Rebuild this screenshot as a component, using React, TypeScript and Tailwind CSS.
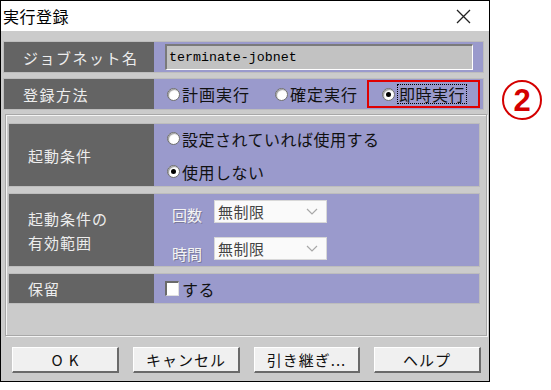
import React from "react";

const JP = { fontFamily: '"Noto Sans CJK JP", "Noto Sans", sans-serif' };

function Radio({ checked }: { checked?: boolean }) {
  return (
    <span className="w-[13px] h-[13px] rounded-full bg-white border border-[#6e6e6e] inline-flex items-center justify-center shadow-[inset_1px_1px_1px_#9a9a9a] shrink-0">
      {checked && <span className="w-[5px] h-[5px] rounded-full bg-black" />}
    </span>
  );
}

function Btn({ children, w }: { children: React.ReactNode; w: string }) {
  return (
    <div
      className={`${w} h-[26px] bg-[#f0f0f0] border-t border-l border-t-white border-l-white border-b-2 border-r-2 border-b-[#6a6a6a] border-r-[#6a6a6a] flex items-center justify-center text-[15px] text-[#111] leading-none`}
    >
      {children}
    </div>
  );
}

function Select() {
  return (
    <div className="w-[113px] h-[23px] bg-[#fafafa] border border-[#d8d8d8] flex items-center pl-[3px] pr-[8px] text-[15px] text-[#444] leading-none">
      <span className="flex-1 tracking-[0.5px]">無制限</span>
      <svg width="12" height="7" viewBox="0 0 12 7">
        <path d="M1 1 L6 6 L11 1" fill="none" stroke="#a8a8a8" strokeWidth="1.2" />
      </svg>
    </div>
  );
}

export default function App() {
  return (
    <div className="w-[551px] h-[390px] bg-white flex items-start" style={JP}>
      <div className="w-[490px] h-[382px] border border-black flex flex-col bg-[#cbcbcb]">
        {/* title bar */}
        <div className="h-[30px] bg-white flex items-center justify-between pl-[2px] pr-[18px]">
          <span className="text-[16px] text-black leading-none tracking-[0.5px]">実行登録</span>
          <svg width="15" height="15" viewBox="0 0 15 15">
            <path d="M1 1 L14 14 M14 1 L1 14" stroke="#222" strokeWidth="1.3" />
          </svg>
        </div>
        {/* body */}
        <div className="flex flex-col pt-[10px]">
          {/* row 1 */}
          <div className="ml-[2px] w-[481px] h-[32px] flex border border-[#bdbdbd]">
            <div className="w-[150px] bg-[#646464] text-[#ededed] text-[15px] flex items-center pl-[19px] tracking-[1.5px] leading-none">
              ジョブネット名
            </div>
            <div className="flex-1 bg-[#9a9acc] flex items-center pl-[11px]">
              <div className="w-[308px] h-[26px] bg-[#c2c2c2] border-t-2 border-l-2 border-t-[#7a7a7a] border-l-[#7a7a7a] border-b border-r border-b-white border-r-white flex items-center pl-[2px] text-[13.3px] text-black leading-none" style={{ fontFamily: '"Liberation Mono", monospace' }}>
                terminate-jobnet
              </div>
            </div>
          </div>
          {/* row 2 */}
          <div className="ml-[2px] mt-[5px] w-[481px] h-[32px] flex border border-[#bdbdbd]">
            <div className="w-[150px] bg-[#646464] text-[#ededed] text-[15px] flex items-center pl-[19px] tracking-[1.5px] leading-none">
              登録方法
            </div>
            <div className="flex-1 bg-[#9a9acc] flex items-center pl-[13px] text-[16px] text-[#111] leading-none">
              <div className="flex items-center gap-[2px]">
                <Radio />
                <span className="tracking-[1px]">計画実行</span>
              </div>
              <div className="flex items-center gap-[2px] ml-[25px]">
                <Radio />
                <span className="tracking-[1px]">確定実行</span>
              </div>
              <div className="ml-[9px] w-[113px] h-[28px] border-2 border-[#e00000] flex items-center pl-[13px] gap-[2px]">
                <Radio checked />
                <span className="tracking-[0.5px] border border-dotted border-black px-[1px] py-[1px]">即時実行</span>
              </div>
            </div>
          </div>
          {/* group */}
          <div className="ml-[4px] mt-[4px] w-[482px] h-[222px] border border-[#a8a8a8] shadow-[inset_1px_1px_0_#f4f4f4,1px_1px_0_#f4f4f4] flex flex-col pl-[2px] pt-[8px]">
            {/* Row A */}
            <div className="w-[472px] h-[64px] flex border border-[#bdbdbd]">
              <div className="w-[145px] bg-[#646464] text-[#ededed] text-[15px] flex items-center pl-[19px] tracking-[1px] leading-none">
                起動条件
              </div>
              <div className="flex-1 bg-[#9a9acc] flex flex-col justify-center gap-[17px] pl-[13px] text-[16px] text-[#111] leading-none">
                <div className="flex items-center gap-[2px]">
                  <Radio />
                  <span className="tracking-[0.5px]">設定されていれば使用する</span>
                </div>
                <div className="flex items-center gap-[2px]">
                  <Radio checked />
                  <span className="tracking-[0.5px]">使用しない</span>
                </div>
              </div>
            </div>
            {/* Row B */}
            <div className="mt-[6px] w-[472px] h-[74px] flex border border-[#bdbdbd]">
              <div className="w-[145px] bg-[#646464] text-[#ededed] text-[15px] flex flex-col justify-center gap-[9px] pl-[19px] tracking-[1px] leading-none">
                <span>起動条件の</span>
                <span>有効範囲</span>
              </div>
              <div className="flex-1 bg-[#9a9acc] flex flex-col justify-center gap-[13px] pl-[18px] text-[15px] leading-none">
                <div className="flex items-center gap-[12px]">
                  <span className="text-[#f4f4f4] [text-shadow:1px_1px_0_#7a7a9a] pt-[6px]">回数</span>
                  <Select />
                </div>
                <div className="flex items-center gap-[12px]">
                  <span className="text-[#f4f4f4] [text-shadow:1px_1px_0_#7a7a9a] pt-[10px]">時間</span>
                  <Select />
                </div>
              </div>
            </div>
            {/* Row C */}
            <div className="mt-[6px] w-[472px] h-[31px] flex border border-[#bdbdbd]">
              <div className="w-[145px] bg-[#646464] text-[#ededed] text-[15px] flex items-center pl-[19px] tracking-[1px] leading-none">
                保留
              </div>
              <div className="flex-1 bg-[#9a9acc] flex items-center pl-[11px] gap-[3px] text-[16px] text-[#111] leading-none">
                <span className="w-[14px] h-[15px] bg-white border-t-2 border-l-2 border-t-[#6a6a6a] border-l-[#6a6a6a] border-b border-r border-b-[#e0e0e0] border-r-[#e0e0e0]" />
                <span className="tracking-[0.5px]">する</span>
              </div>
            </div>
          </div>
          {/* buttons */}
          <div className="mt-[11px] flex pl-[11px] gap-[14px]">
            <Btn w="w-[107px]"><span className="tracking-[6px] pl-[6px]">OK</span></Btn>
            <Btn w="w-[107px]"><span className="tracking-[1px]">キャンセル</span></Btn>
            <Btn w="w-[106px]"><span className="tracking-[1px]">引き継ぎ...</span></Btn>
            <Btn w="w-[107px]"><span className="tracking-[1px]">ヘルプ</span></Btn>
          </div>
        </div>
      </div>
      <div className="ml-[12px] mt-[80px] w-[40px] h-[40px] rounded-full border-2 border-[#d40000] flex items-center justify-center text-[#d40000] text-[31px] font-bold leading-none" style={{ fontFamily: '"Liberation Sans", sans-serif' }}>
        2
      </div>
    </div>
  );
}
